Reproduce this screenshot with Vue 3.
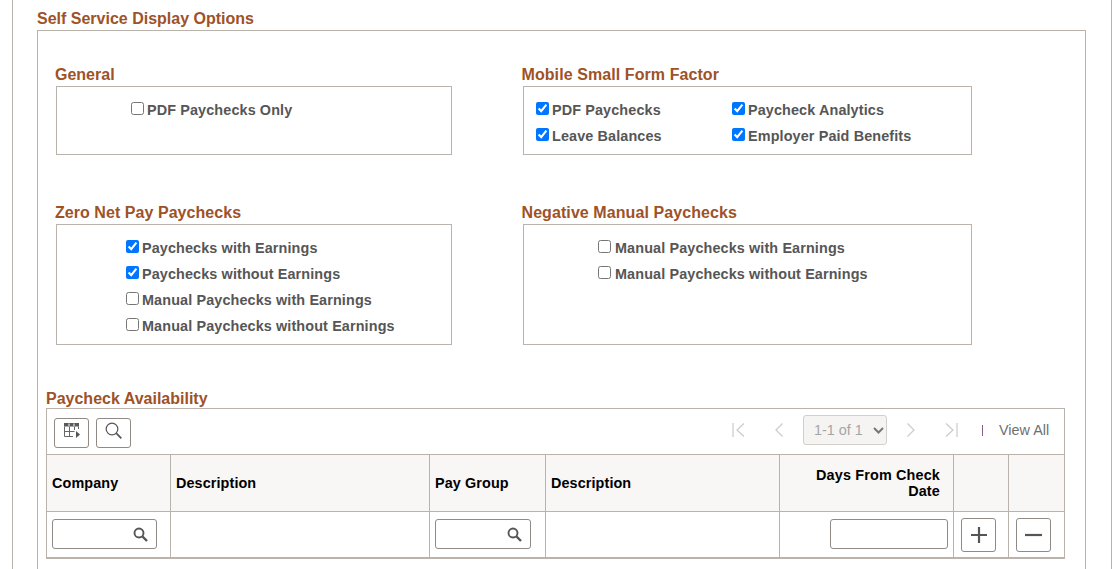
<script setup>
const columns = [
  { label: 'Company' },
  { label: 'Description' },
  { label: 'Pay Group' },
  { label: 'Description' },
  { label: 'Days From Check Date', right: true },
  { label: '' },
  { label: '' }
]
const panels = [
  { title: 'General', kind: 'general', items: [{ text: 'PDF Paychecks Only', on: false }] },
  {
    title: 'Mobile Small Form Factor', kind: 'mobile',
    items: [
      { text: 'PDF Paychecks', on: true },
      { text: 'Paycheck Analytics', on: true },
      { text: 'Leave Balances', on: true },
      { text: 'Employer Paid Benefits', on: true }
    ]
  },
  {
    title: 'Zero Net Pay Paychecks', kind: 'zero',
    items: [
      { text: 'Paychecks with Earnings', on: true },
      { text: 'Paychecks without Earnings', on: true },
      { text: 'Manual Paychecks with Earnings', on: false },
      { text: 'Manual Paychecks without Earnings', on: false }
    ]
  },
  {
    title: 'Negative Manual Paychecks', kind: 'negative',
    items: [
      { text: 'Manual Paychecks with Earnings', on: false },
      { text: 'Manual Paychecks without Earnings', on: false }
    ]
  }
]
</script>

<template>
  <div class="page">
    <h2 class="title">Self Service Display Options</h2>
    <section class="frame">
      <div class="panels">
        <div v-for="p in panels" :key="p.title" class="panel" :class="'panel-' + p.kind">
          <h3 class="heading">{{ p.title }}</h3>
          <div class="box" :class="p.kind">
            <label v-for="it in p.items" :key="it.text" class="opt">
              <input type="checkbox" :checked="it.on" />
              <span>{{ it.text }}</span>
            </label>
          </div>
        </div>
      </div>

      <h3 class="heading grid-title">Paycheck Availability</h3>
      <div class="grid-wrap">
        <div class="toolbar">
          <button class="tool" type="button" aria-label="Personalize">
            <svg width="16" height="15" viewBox="0 0 16 15">
              <path d="M0 0H15V3.5H0Z" fill="#5a5a5a" />
              <path d="M5 0.5V3M10 0.5V3" stroke="#fff" stroke-width="1" />
              <path d="M0.5 3.5V13.5H9M0.5 8.5H10.5M5.5 3.5V13.5M10.5 3.5V7M14.5 3.5V6" fill="none" stroke="#666" stroke-width="1" />
              <path d="M12 8L16 11.5L12 15Z" fill="#555" />
            </svg>
          </button>
          <button class="tool" type="button" aria-label="Find">
            <svg width="17" height="17" viewBox="0 0 17 17">
              <circle cx="7" cy="7" r="5.8" fill="none" stroke="#555" stroke-width="1.2" />
              <path d="M11.2 11.2L16.3 16.3" stroke="#555" stroke-width="1.7" />
            </svg>
          </button>
          <div class="pager">
            <svg class="pg first" width="13" height="14" viewBox="0 0 13 14"><path d="M1 0V14M12 0.5L5 7L12 13.5" fill="none" stroke="#cbcbcb" stroke-width="1.2" /></svg>
            <svg class="pg prev" width="8" height="14" viewBox="0 0 8 14"><path d="M7.5 0.5L1 7L7.5 13.5" fill="none" stroke="#cbcbcb" stroke-width="1.2" /></svg>
            <span class="range-wrap">
              <select class="range" disabled><option>1-1 of 1</option></select>
              <svg class="caret" width="11" height="7" viewBox="0 0 11 7"><path d="M1 1L5.5 5.5L10 1" fill="none" stroke="#777" stroke-width="2" /></svg>
            </span>
            <svg class="pg next" width="8" height="14" viewBox="0 0 8 14"><path d="M0.5 0.5L7 7L0.5 13.5" fill="none" stroke="#cbcbcb" stroke-width="1.2" /></svg>
            <svg class="pg last" width="13" height="14" viewBox="0 0 13 14"><path d="M12 0V14M1 0.5L8 7L1 13.5" fill="none" stroke="#cbcbcb" stroke-width="1.2" /></svg>
            <span class="sep"></span>
            <span class="viewall">View All</span>
          </div>
        </div>
        <div class="table">
          <div v-for="(c, i) in columns" :key="i" class="th" :class="{ right: c.right }">{{ c.label }}</div>

          <div class="td">
            <span class="lookup company">
              <svg width="15" height="15" viewBox="0 0 15 15"><circle cx="6" cy="6" r="4.5" fill="none" stroke="#555" stroke-width="1.9" /><path d="M9.5 9.5L14 14" stroke="#555" stroke-width="2.4" /></svg>
            </span>
          </div>
          <div class="td"></div>
          <div class="td">
            <span class="lookup group">
              <svg width="15" height="15" viewBox="0 0 15 15"><circle cx="6" cy="6" r="4.5" fill="none" stroke="#555" stroke-width="1.9" /><path d="M9.5 9.5L14 14" stroke="#555" stroke-width="2.4" /></svg>
            </span>
          </div>
          <div class="td"></div>
          <div class="td days"><input class="field" type="text" /></div>
          <div class="td act">
            <button class="rowbtn" type="button" aria-label="Add row">
              <svg width="16" height="16" viewBox="0 0 16 16"><path d="M8 0V16M0 8H16" stroke="#555" stroke-width="2.2" /></svg>
            </button>
          </div>
          <div class="td act">
            <button class="rowbtn" type="button" aria-label="Delete row">
              <svg width="17" height="16" viewBox="0 0 17 16"><path d="M0 8H17" stroke="#555" stroke-width="2.2" /></svg>
            </button>
          </div>
        </div>
      </div>
    </section>
  </div>
</template>

<style>
html, body { background: #fff; overflow: hidden; }
</style>

<style scoped>
.page {
  box-sizing: border-box;
  width: 1100px;
  height: 569px;
  margin-left: 12px;
  padding: 0 25px 0 24px;
  border-left: 1px solid #b9b3ab;
  border-right: 1px solid #b9b3ab;
  overflow: hidden;
  font-family: "Liberation Sans", Arial, sans-serif;
}
.title, .heading {
  margin: 0;
  color: #9e5227;
  font-size: 16px;
  line-height: 20px;
  font-weight: 700;
}
.title { height: 30px; padding-top: 9px; box-sizing: border-box; }
.frame {
  box-sizing: border-box;
  height: 600px;
  border: 1px solid #b9b3ab;
  padding: 34px 0 0 8px;
}
.panels {
  display: grid;
  grid-template-columns: 396px 449px;
  column-gap: 71px;
  row-gap: 48px;
  margin-left: 10px;
}
.panel .heading { margin-left: -1px; margin-bottom: 1px; }
.panel-mobile .heading, .panel-negative .heading { margin-left: -1.5px; letter-spacing: 0.08px; }
.panel-zero .heading { letter-spacing: 0.05px; }
.box {
  box-sizing: border-box;
  border: 1px solid #b9b3ab;
  padding-top: 15px;
  display: grid;
  align-content: start;
  row-gap: 10px;
}
.general { height: 69px; padding-left: 74px; }
.mobile {
  height: 69px;
  padding-left: 12px;
  grid-template-columns: 196px auto;
  justify-content: start;
}
.zero { height: 121px; padding-left: 69px; }
.negative { height: 121px; padding-left: 74px; }
.negative .opt input { margin-right: 4px; }
.opt {
  display: flex;
  align-items: flex-start;
  height: 16px;
  color: #565656;
  font-size: 14.4px;
  letter-spacing: 0.12px;
  line-height: 16px;
  font-weight: 700;
  white-space: nowrap;
}
.opt input {
  width: 13px;
  height: 13px;
  margin: 0 3px 0 0;
  flex: none;
}
.grid-title { margin-top: 44px; margin-bottom: -1px; }
.grid-wrap {
  box-sizing: border-box;
  width: 1019px;
  border: 1px solid #b9b3ab;
  border-bottom-width: 2px;
}
.toolbar {
  box-sizing: border-box;
  height: 45px;
  padding: 9px 0 0 7px;
  display: flex;
  align-items: flex-start;
  gap: 7px;
}
.tool, .rowbtn {
  box-sizing: border-box;
  display: flex;
  align-items: center;
  justify-content: center;
  width: 35px;
  padding: 0;
  background: #fff;
  border: 1px solid #8f8a85;
  border-radius: 3px;
}
.tool { height: 30px; padding-bottom: 5px; }
.rowbtn { height: 34px; }
.pager {
  margin-left: auto;
  display: flex;
  align-items: center;
  height: 30px;
  margin-top: -3px;
  padding-right: 14px;
}
.pg { flex: none; }
.prev { margin-left: 30px; }
.range-wrap {
  position: relative;
  display: block;
  height: 30px;
  margin-left: 20px;
}
.range {
  box-sizing: border-box;
  display: block;
  width: 84px;
  height: 30px;
  margin: 0;
  padding: 0 0 0 10px;
  appearance: none;
  font-family: inherit;
  font-size: 14.4px;
  color: #a5a5a5;
  background-color: #f5f4f2;
  border: 1px solid #d3d0cc;
  border-radius: 3px;
  opacity: 1;
}
.caret {
  position: absolute;
  right: 3px;
  top: 12px;
}
.next { margin-left: 20px; }
.last { margin-left: 30px; }
.sep {
  width: 1px;
  height: 11px;
  margin-left: 24px;
  background: #8a5a8a;
}
.viewall {
  width: 51px;
  margin-left: 16px;
  font-size: 14.4px;
  color: #6f6f6f;
  white-space: nowrap;
}
.table {
  display: grid;
  grid-template-columns: 124px 259px 116px 234px 174px 55px 55px;
  grid-template-rows: 57px 46px;
}
.th, .td {
  box-sizing: border-box;
  border-right: 1px solid #b9b3ab;
  border-top: 1px solid #b9b3ab;
}
.th {
  display: flex;
  align-items: center;
  padding: 0 5px;
  background: #f8f7f5;
  color: #000;
  font-size: 14.4px;
  letter-spacing: 0.1px;
  line-height: 16px;
  font-weight: 700;
}
.th:nth-child(7), .td:last-child { border-right: 0; }
.th.right {
  text-align: right;
  justify-content: flex-end;
  padding-right: 13px;
  padding-left: 30px;
  letter-spacing: 0.16px;
}
.td { padding: 7px 0 0 5px; }
.lookup {
  box-sizing: border-box;
  display: flex;
  align-items: center;
  justify-content: flex-end;
  height: 30px;
  padding-right: 8px;
  border: 1px solid #8f8a85;
  border-radius: 3px;
}
.company { width: 105px; }
.group { width: 96px; }
.field {
  box-sizing: border-box;
  display: block;
  width: 118px;
  height: 30px;
  margin: 0;
  border: 1px solid #8f8a85;
  border-radius: 3px;
  background: #fff;
}
.days { padding-left: 50px; }
.act { padding: 6px 0 0 7px; }
</style>
